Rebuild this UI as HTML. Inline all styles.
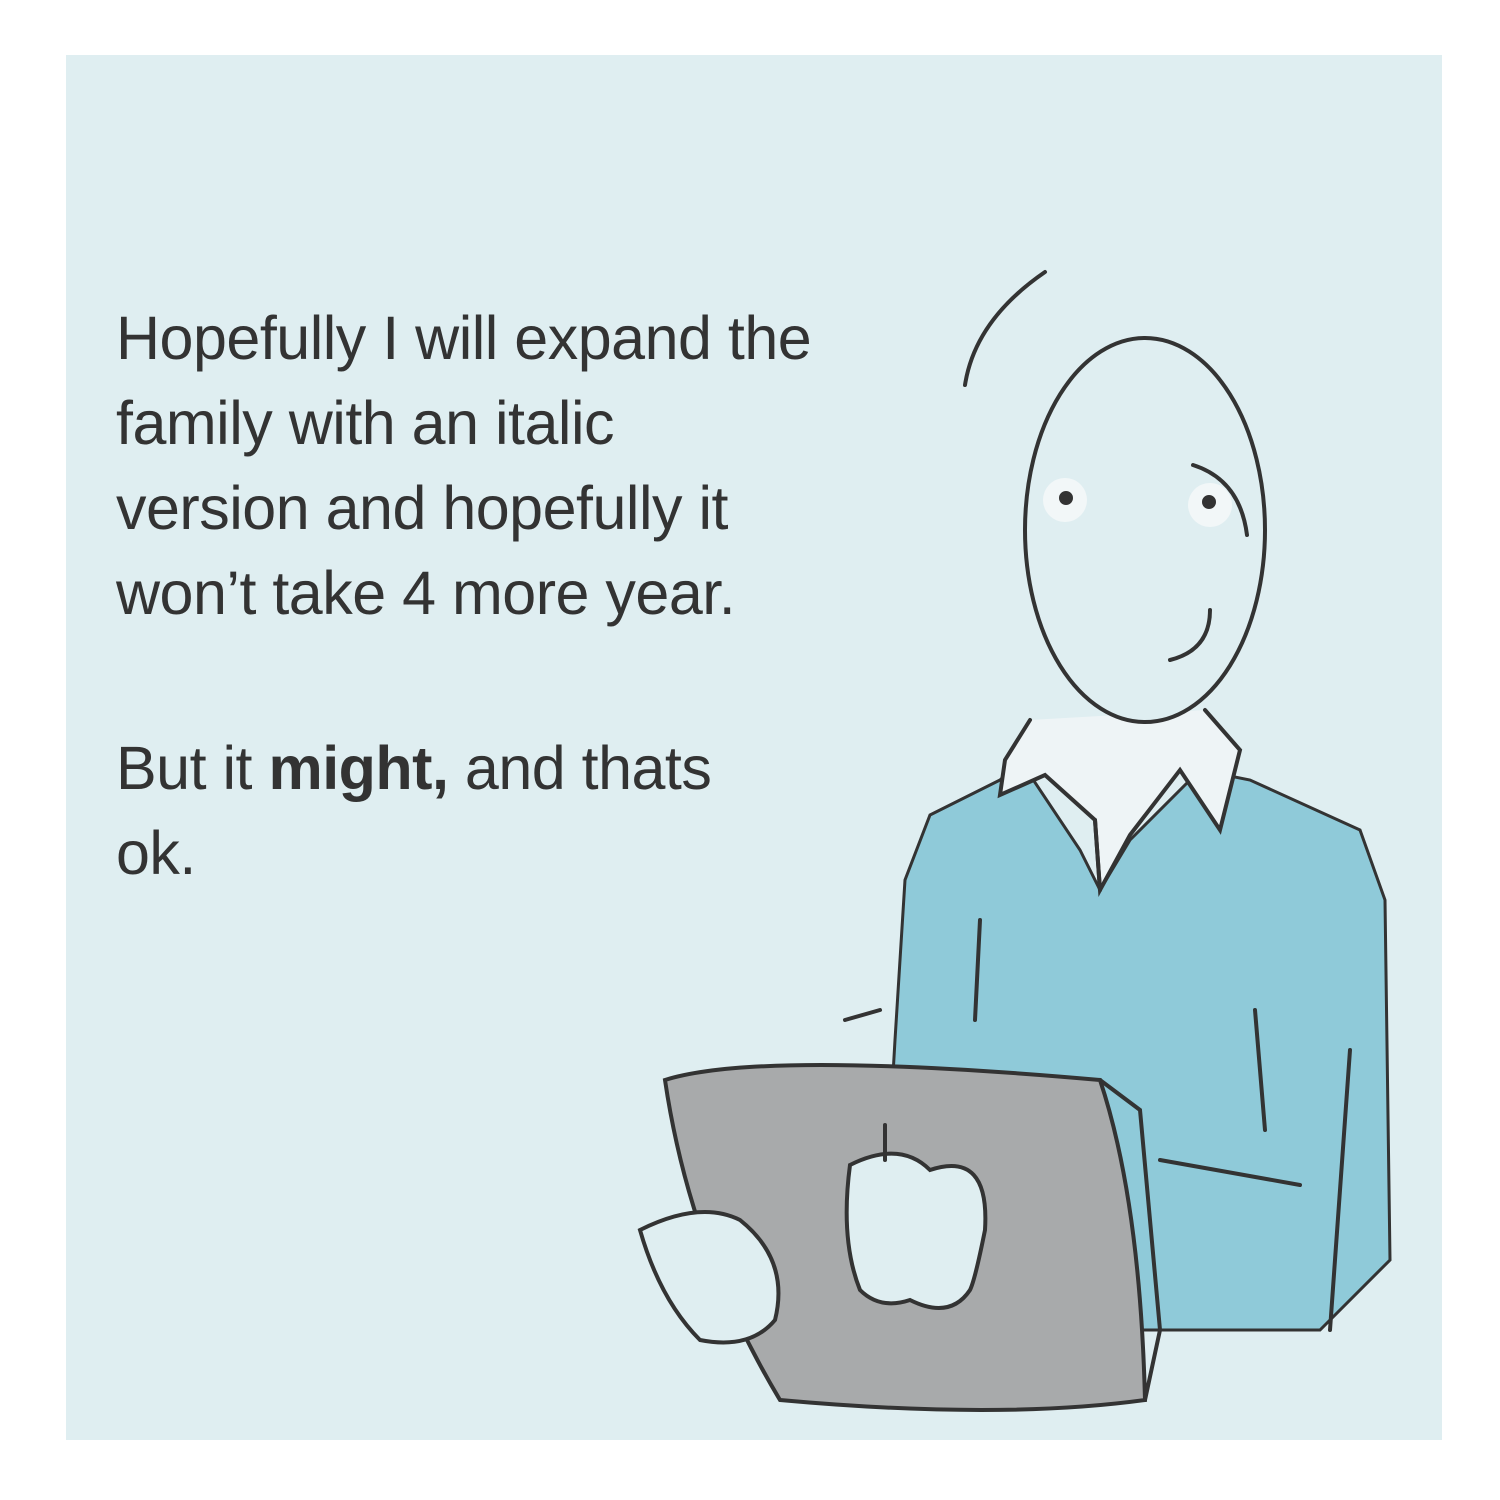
<!DOCTYPE html>
<html><head><meta charset="utf-8"><style>
html,body{margin:0;padding:0;background:#fff;}
body{width:1500px;height:1500px;position:relative;overflow:hidden;}
.panel{position:absolute;left:66px;top:55px;width:1376px;height:1385px;background:#dfeef1;}
.t{position:absolute;left:116px;font-family:"Liberation Sans",sans-serif;font-size:61px;color:#333;letter-spacing:-0.5px;line-height:85px;}
svg{position:absolute;left:0;top:0;}
</style></head><body>
<div class="panel"></div>
<div class="t" style="top:296px">Hopefully I will expand the<br>family with an italic<br>version and hopefully it<br>won’t take 4 more year.</div>
<div class="t" style="top:726px">But it <b>might,</b> and thats<br>ok.</div>
<svg width="1500" height="1500" viewBox="0 0 1500 1500">
<g stroke="#333" stroke-width="4" fill="none" stroke-linecap="round">
<path d="M1000 780 L930 815 L905 880 L895 1040 L880 1300 L1130 1330 L1320 1330 L1390 1260 L1385 900 L1360 830 L1250 780 L1200 770 L1130 840 L1100 890 L1080 850 L1020 760 Z" fill="#8fcad9" stroke-width="3"/>
<path d="M1030 720 L1005 760 L1000 795 L1045 775 L1095 820 L1100 890 L1130 835 L1180 770 L1220 830 L1240 750 L1205 710" fill="#eef4f6"/>
<path d="M1095 820 L1100 890"/>
<ellipse cx="1145" cy="530" rx="120" ry="192" fill="#dfeef1"/>
<path d="M965 385 Q975 320 1045 272"/>
<circle cx="1065" cy="500" r="22" fill="#f2f7f8" stroke="none"/>
<circle cx="1210" cy="505" r="22" fill="#f2f7f8" stroke="none"/>
<circle cx="1066" cy="498" r="5" fill="#333"/>
<circle cx="1209" cy="502" r="5" fill="#333"/>
<path d="M1193 465 Q1240 480 1247 535"/>
<path d="M1210 610 Q1210 650 1170 660"/>
<path d="M980 920 L975 1020 M1255 1010 L1265 1130 M1350 1050 L1330 1330"/>
<path d="M665 1080 Q760 1050 1100 1080 Q1140 1200 1145 1400 Q1000 1420 780 1400 Q690 1250 665 1080 Z" fill="#a8aaab"/>
<path d="M1100 1080 L1140 1110 L1160 1330 L1145 1400"/>
<path d="M1160 1160 L1300 1185"/>
<path d="M850 1165 Q900 1140 930 1170 Q990 1150 985 1230 Q975 1280 970 1290 Q950 1320 910 1300 Q880 1310 860 1290 Q840 1240 850 1165 Z" fill="#dfeef1"/>
<path d="M885 1125 L885 1160"/>
<path d="M640 1230 Q700 1200 740 1220 Q790 1260 775 1320 Q750 1350 700 1340 Q660 1300 640 1230 Z" fill="#dfeef1"/>
<path d="M845 1020 L880 1010"/>
</g>
</svg>
</body></html>
